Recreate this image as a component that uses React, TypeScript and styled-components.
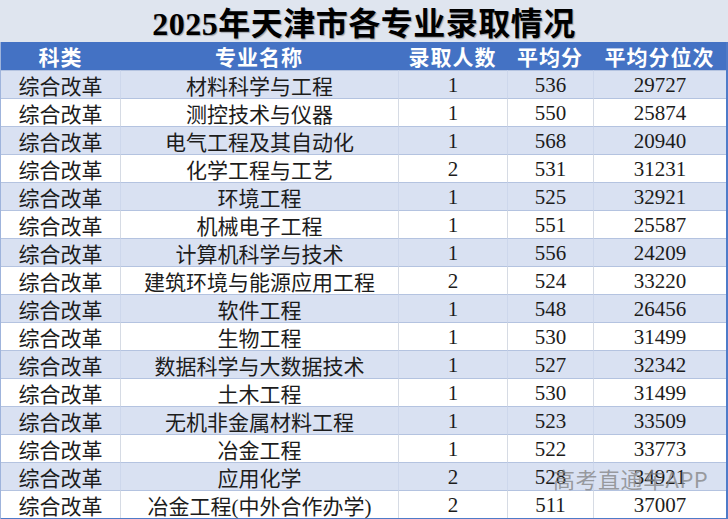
import React from "react";
import styled, { createGlobalStyle } from "styled-components";

const Global = createGlobalStyle`
  html, body { margin: 0; padding: 0; background: #ffffff; }
  * { box-sizing: border-box; }
`;

const serif = `"Liberation Serif", "Noto Sans CJK SC", serif`;

const Sheet = styled.div`
  position: relative;
  width: 728px;
  font-family: ${serif};
  color: #1c1c1c;
`;

const Title = styled.div`
  height: 42px;
  background: #dfe5ef;
  display: flex;
  align-items: center;
  justify-content: center;
  font-size: 32px;
  font-weight: 700;
  color: #000;
  text-shadow: 1px 1px 1px rgba(0, 0, 0, 0.3);
  letter-spacing: 0.5px;
`;

const Table = styled.div`
  display: grid;
  grid-template-columns: 119px 278px 109px 86px 1fr;
  border-right: 2px solid #4f7bc8;
  border-bottom: 2px solid #4f7bc8;
  border-left: 1px solid #9fb4dc;
`;

const HeadCell = styled.div`
  height: 28px;
  background: #4472c4;
  color: #ffffff;
  font-weight: 700;
  font-size: 21px;
  display: flex;
  align-items: center;
  justify-content: center;
  letter-spacing: 1px;
`;

const Cell = styled.div<{ $shade: boolean; $first?: boolean }>`
  height: 28px;
  background: ${(p) => (p.$shade ? "#d9e1f2" : "#ffffff")};
  border-top: 1px solid #b4c3e0;
  border-left: ${(p) => (p.$first ? "none" : `1px solid ${p.$shade ? "#cdd7ec" : "#d6dbe4"}`)};
  display: flex;
  align-items: center;
  justify-content: center;
  font-size: 21px;
  white-space: nowrap;
  padding-top: 1px;
`;

const Watermark = styled.div`
  position: absolute;
  left: 553px;
  top: 465px;
  font-family: "Noto Sans CJK SC", "Noto Sans", sans-serif;
  font-size: 22px;
  line-height: 26px;
  color: rgba(130, 130, 130, 0.75);
  white-space: nowrap;
  letter-spacing: 0.5px;
`;

const rows: [string, string, string, string][] = [
  ["材料科学与工程", "1", "536", "29727"],
  ["测控技术与仪器", "1", "550", "25874"],
  ["电气工程及其自动化", "1", "568", "20940"],
  ["化学工程与工艺", "2", "531", "31231"],
  ["环境工程", "1", "525", "32921"],
  ["机械电子工程", "1", "551", "25587"],
  ["计算机科学与技术", "1", "556", "24209"],
  ["建筑环境与能源应用工程", "2", "524", "33220"],
  ["软件工程", "1", "548", "26456"],
  ["生物工程", "1", "530", "31499"],
  ["数据科学与大数据技术", "1", "527", "32342"],
  ["土木工程", "1", "530", "31499"],
  ["无机非金属材料工程", "1", "523", "33509"],
  ["冶金工程", "1", "522", "33773"],
  ["应用化学", "2", "528", "34921"],
  ["冶金工程(中外合作办学)", "2", "511", "37007"],
];

const heads = ["科类", "专业名称", "录取人数", "平均分", "平均分位次"];

export default function App() {
  return (
    <>
      <Global />
      <Sheet>
        <Title>2025年天津市各专业录取情况</Title>
        <Table>
          {heads.map((h) => (
            <HeadCell key={h}>{h}</HeadCell>
          ))}
          {rows.map((r, i) => {
            const shade = i % 2 === 0;
            return (
              <React.Fragment key={i}>
                <Cell $shade={shade} $first>综合改革</Cell>
                <Cell $shade={shade}>{r[0]}</Cell>
                <Cell $shade={shade}>{r[1]}</Cell>
                <Cell $shade={shade}>{r[2]}</Cell>
                <Cell $shade={shade}>{r[3]}</Cell>
              </React.Fragment>
            );
          })}
        </Table>
        <Watermark>高考直通车APP</Watermark>
      </Sheet>
    </>
  );
}
